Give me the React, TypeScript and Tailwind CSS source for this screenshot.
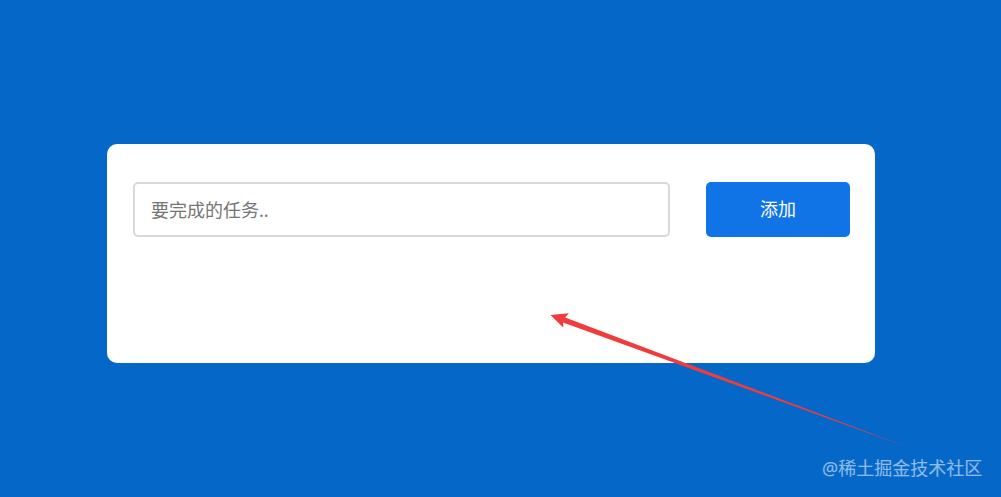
import React from "react";

export default function App() {
  return (
    <div
      className="relative h-[497px] w-full overflow-hidden bg-[#0568c9] pt-[144px] pl-[107px]"
      style={{ fontFamily: '"Noto Sans", "Noto Sans CJK SC", sans-serif' }}
    >
      <div className="flex h-[219px] w-[768px] items-start gap-[36px] rounded-[10px] bg-white pt-[38px] pl-[26px] pr-[25px]">
        <input
          className="h-[55px] flex-1 rounded-[5px] border-2 border-[#d9d9d9] bg-white px-[16px] text-[18px] text-[#333] outline-none placeholder:text-[#757575]"
          placeholder="要完成的任务.."
        />
        <button className="h-[55px] w-[144px] rounded-[5px] bg-[#1174e6] text-[18px] text-white">
          添加
        </button>
      </div>

      <svg
        className="pointer-events-none absolute left-0 top-0"
        width="1001"
        height="497"
        viewBox="0 0 1001 497"
      >
        <polygon
          points="550.5,315 568.8,313.2 565.2,317.6 907,447 563,322.4 563.4,327.8"
          fill="#f03c3c"
        />
      </svg>

      <div className="absolute left-[822px] top-[455px] text-[18px] leading-[26px] text-white/55">
        @稀土掘金技术社区
      </div>
    </div>
  );
}
